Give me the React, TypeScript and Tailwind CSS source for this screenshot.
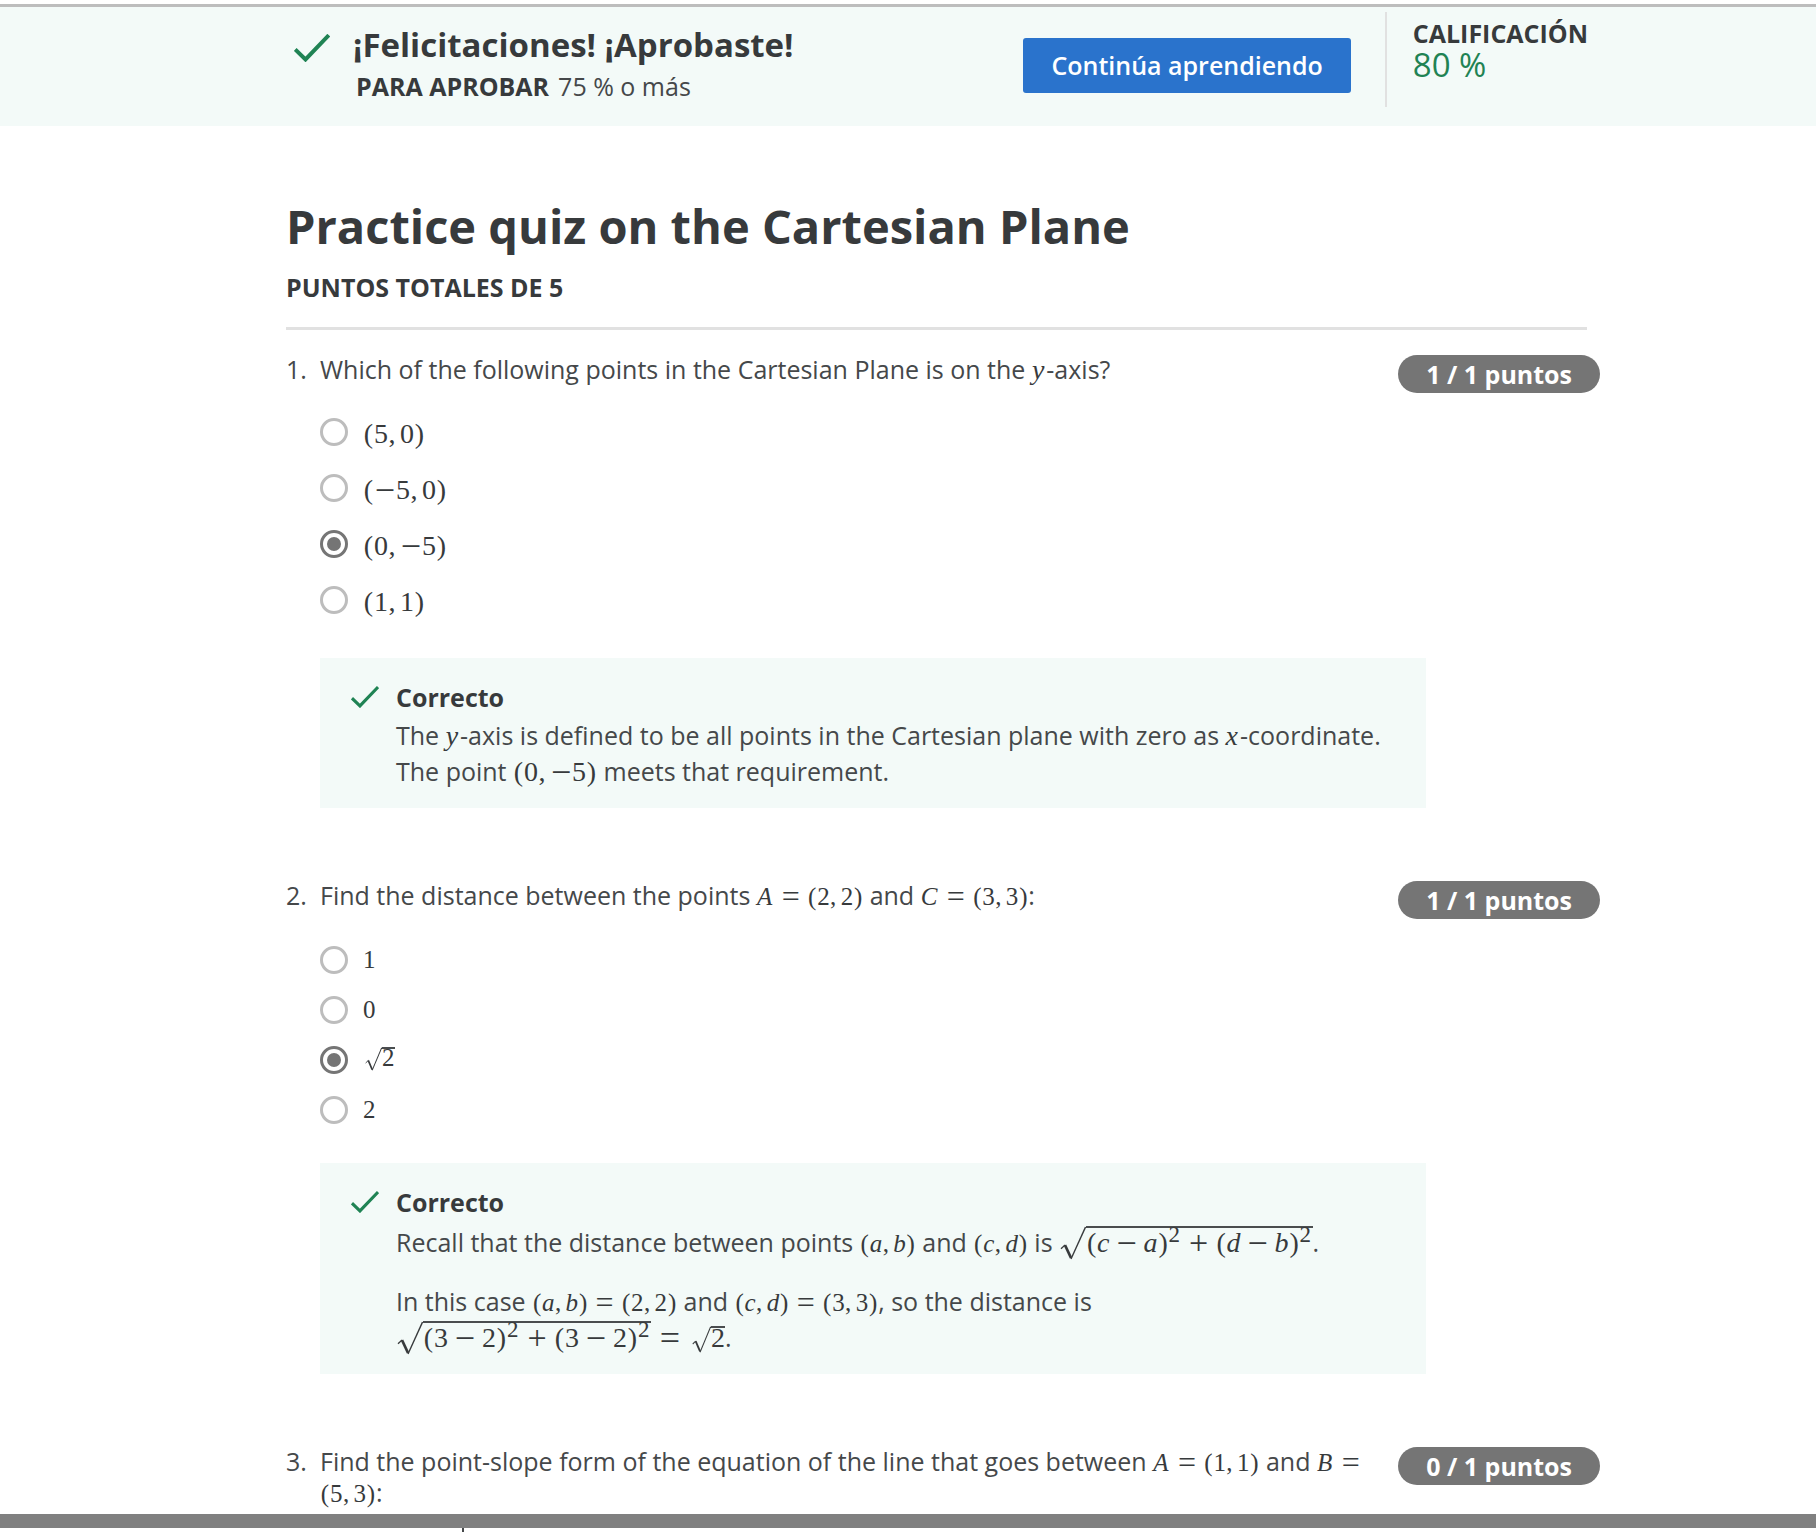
import type { ReactNode } from "react";

const smallGlyphs: Record<string, string> = {
  "(": "w-[10px]",
  ")": "w-[10px]",
  ",": "mr-[4px] w-[7px]",
  "~": "w-[20px] align-[-3px] text-[32px]",
  "−": "mx-[6px] w-[20px] align-[-3px] text-[32px]",
  "+": "mx-[6px] w-[20px] align-[-2px] text-[32px]",
  "=": "mx-[7px] w-[19px] align-[-2px] text-[32px]",
};

const largeGlyphs: Record<string, string> = {
  "(": "w-[11px]",
  ")": "w-[11px]",
  ",": "mr-[4px] w-[8px]",
  "~": "w-[22px] align-[-3px] text-[36px]",
  "−": "mx-[6px] w-[22px] align-[-3px] text-[36px]",
  "+": "mx-[6px] w-[22px] align-[-2px] text-[34px]",
  "=": "mx-[8px] w-[22px] align-[-3px] text-[36px]",
};

/* Sets a short formula glyph by glyph: ~ is a unary minus, ^ raises the next digit. */
function Tex({ src, large = false }: { src: string; large?: boolean }) {
  const tokens = src.match(/\^.|./gu) ?? [];
  const glyphs = large ? largeGlyphs : smallGlyphs;
  return (
    <span
      className={
        "whitespace-nowrap font-['Liberation_Serif',serif] leading-none text-[#373a3c] " +
        (large ? "text-[28px]" : "text-[25px]")
      }
    >
      {tokens.map((t, i) => {
        if (t[0] === "^") {
          return (
            <sup key={i} className="static inline-block w-[13px] align-[10px] text-[23px] leading-[0px]">
              {t[1]}
            </sup>
          );
        }
        if (glyphs[t]) {
          return (
            <span key={i} className={"inline-block text-center leading-[20px] " + glyphs[t]}>
              {t === "~" ? "−" : t}
            </span>
          );
        }
        return /[a-zA-Z]/.test(t) ? (
          <i key={i} className={/[A-Zxy]/.test(t) ? "mr-[2px]" : ""}>
            {t}
          </i>
        ) : (
          <span key={i}>{t}</span>
        );
      })}
    </span>
  );
}

const rootSizes = {
  small: { pad: "ml-[2px] pl-[17px]", sign: "w-[17px]", body: "pb-[5px] leading-[17px] text-[25px]" },
  medium: { pad: "ml-[3px] pl-[19px]", sign: "w-[19px]", body: "pb-[6px] leading-[19px] text-[28px]" },
  wide: { pad: "ml-[1px] pl-[26px]", sign: "w-[26px]", body: "pb-[2px] leading-[30px] text-[28px]" },
};

function Root({ src, size = "small" }: { src: string; size?: keyof typeof rootSizes }) {
  const s = rootSizes[size];
  return (
    <span className={"relative inline-block font-['Liberation_Serif',serif] leading-[0px] " + s.pad}>
      <svg
        className={"absolute top-0 left-0 h-full " + s.sign}
        viewBox="0 0 26 33"
        preserveAspectRatio="none"
        fill="none"
        stroke="#373a3c"
        aria-hidden="true"
      >
        <path d="M1 22 L5 18.500" strokeWidth="1.300" />
        <path d="M5 18.500 L11 31" strokeWidth="2.600" />
        <path d="M11 32 L25.500 1" strokeWidth="1.400" />
      </svg>
      <span className={"inline-block border-t-2 border-[#4a4d4f] text-[#373a3c] " + s.body}>
        {size === "wide" ? <Tex src={src} large /> : src}
      </span>
    </span>
  );
}

function Check({ className }: { className: string }) {
  return (
    <svg className={className} viewBox="0 0 36 28" fill="none" stroke="#1f8354" strokeWidth="4" aria-hidden="true">
      <path d="M1.200 15.500 L11.500 25.500 L34.800 1.200" />
    </svg>
  );
}

function Options({ name, items, chosen, tall = false }: { name: string; items: ReactNode[]; chosen: number; tall?: boolean }) {
  return (
    <div role="radiogroup" className="flex flex-col items-start">
      {items.map((item, i) => (
        <label key={i} className={"flex items-center gap-[15px] " + (tall ? "h-[56px]" : "h-[50px]")}>
          <input
            type="radio"
            name={name}
            defaultChecked={i === chosen}
            className="size-[28px] appearance-none rounded-full border-[3px] border-[#bdbdbd] bg-clip-content p-[4px] checked:border-[#757575] checked:bg-[#757575]"
          />
          <span className={"flex items-center " + (tall ? "pt-[3px]" : "pb-[2px]")}>{item}</span>
        </label>
      ))}
    </div>
  );
}

function Feedback({ children }: { children: ReactNode }) {
  return (
    <div className="mr-[174px] flex items-start gap-[17px] bg-[#f3faf8] pt-[21px] pb-[19px] pl-[31px]">
      <Check className="mt-[7px] h-[22px] w-[28px] shrink-0" />
      <div className="leading-[36px]">
        <p className="mb-[2px] font-bold text-[#373a3c]">Correcto</p>
        {children}
      </div>
    </div>
  );
}

function Question({ n, prompt, score, children }: { n: number; prompt: ReactNode; score: string; children?: ReactNode }) {
  return (
    <li className="flex">
      <span className="w-[34px] shrink-0 pt-[1px] leading-[31px]">{n}.</span>
      <div className="min-w-0 flex-1">
        <div className="flex items-start gap-[24px]">
          <p className="min-w-0 flex-1 pt-[1px] leading-[31px]">{prompt}</p>
          <span className="mt-[2px] rounded-[19px] bg-[#757575] px-[28px] leading-[38px] font-bold text-white">{score}</span>
        </div>
        {children}
      </div>
    </li>
  );
}

export default function App() {
  return (
    <div className="overflow-hidden bg-white font-['Open_Sans',sans-serif] text-[25px] text-[#45484a]">
      <header className="mt-[4px] flex h-[122px] border-t-[3px] border-[#bdbdbd] bg-[#f3faf8] pr-[228px] pl-[294px]">
        <Check className="mt-[27px] h-[28px] w-[36px] shrink-0" />
        <div className="flex-1 pt-[15px] pl-[23px] text-[#373a3c]">
          <h2 className="text-[33px] leading-[46px] font-bold">¡Felicitaciones! ¡Aprobaste!</h2>
          <p className="flex gap-[9px] pl-[3px] leading-[36px]">
            <b>PARA APROBAR</b>
            <span className="text-[#45484a]">75 % o más</span>
          </p>
        </div>
        <button type="button" className="mt-[31px] h-[55px] rounded-[3px] bg-[#2a73cc] px-[28px] font-semibold text-white">
          Continúa aprendiendo
        </button>
        <div className="mt-[5px] ml-[34px] h-[95px] border-l-2 border-[#e1e1e1] pt-[6px] pl-[26px]">
          <p className="leading-[30px] font-bold text-[#373a3c]">CALIFICACIÓN</p>
          <p className="text-[33px] leading-[34px] text-[#1f8354]">80 %</p>
        </div>
      </header>

      <main className="pr-[216px] pl-[286px]">
        <h1 className="pt-[68px] text-[47px] leading-[64px] font-bold text-[#373a3c]">Practice quiz on the Cartesian Plane</h1>
        <p className="pt-[12px] leading-[34px] font-bold text-[#373a3c]">PUNTOS TOTALES DE 5</p>
        <hr className="mt-[23px] mr-[13px] border-t-[3px] border-[#e1e1e1]" />
        <ol className="pt-[23px]">
          <Question
            n={1}
            score="1 / 1 puntos"
            prompt={
              <>
                Which of the following points in the Cartesian Plane is on the <Tex src="y" large />
                -axis?
              </>
            }
          >
            <div className="pt-[11px] pb-[30px]">
              <Options
                name="q1"
                tall
                chosen={2}
                items={["(5,0)", "(~5,0)", "(0,~5)", "(1,1)"].map((s) => (
                  <Tex key={s} src={s} large />
                ))}
              />
            </div>
            <Feedback>
              <p>
                The <Tex src="y" large />
                -axis is defined to be all points in the Cartesian plane with zero as <Tex src="x" large />
                -coordinate.
                <br />
                The point <Tex src="(0,~5)" large /> meets that requirement.
              </p>
            </Feedback>
            <div className="h-[71px]" />
          </Question>
          <Question
            n={2}
            score="1 / 1 puntos"
            prompt={
              <>
                Find the distance between the points <Tex src="A=(2,2)" /> and <Tex src="C=(3,3)" />:
              </>
            }
          >
            <div className="pt-[16px] pb-[28px]">
              <Options name="q2" chosen={2} items={[<Tex src="1" />, <Tex src="0" />, <Root src="2" />, <Tex src="2" />]} />
            </div>
            <Feedback>
              <p className="mt-[4px]">
                Recall that the distance between points <Tex src="(a,b)" /> and <Tex src="(c,d)" /> is{" "}
                <Root src="(c−a)^2+(d−b)^2" size="wide" />.
              </p>
              <p className="mt-[23px]">
                In this case <Tex src="(a,b)=(2,2)" /> and <Tex src="(c,d)=(3,3)" />, so the distance is
                <br />
                <Root src="(3−2)^2+(3−2)^2" size="wide" />
                <Tex src="=" large />
                <Root src="2" size="medium" />.
              </p>
            </Feedback>
            <div className="h-[71px]" />
          </Question>
          <Question
            n={3}
            score="0 / 1 puntos"
            prompt={
              <>
                Find the point-slope form of the equation of the line that goes between <Tex src="A=(1,1)" /> and{" "}
                <Tex src="B=" /> <Tex src="(5,3)" />:
              </>
            }
          />
        </ol>
      </main>
      <footer className="mt-[6px] border-t-[14px] border-[#808080] pl-[462px]">
        <div className="h-[4px] w-[2px] bg-[#45484a]" />
      </footer>
    </div>
  );
}
